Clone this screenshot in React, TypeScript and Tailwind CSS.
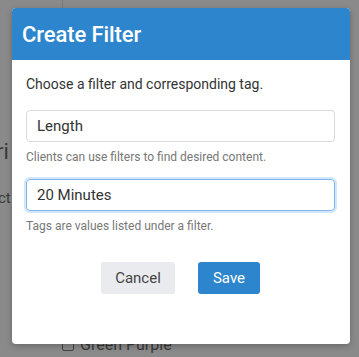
export default function App() {
  return (
    <div
      className="relative w-[359px] h-[357px] overflow-hidden bg-[#8a8a8a]"
      style={{ fontFamily: 'Roboto, "Liberation Sans", sans-serif' }}
    >
      {/* page behind the overlay */}
      <div className="flex h-full">
        <div className="w-[62px] shrink-0 flex flex-col text-[#3a3a3a]">
          <span className="mt-[138px] -ml-[4px] text-[22px] leading-[28px]">ri</span>
          <span className="mt-[22px] -ml-[2px] text-[15px] leading-[20px]">ct</span>
        </div>
        <div className="flex flex-col border-l border-[#7a7a7a] h-[10px]" />
      </div>
      <div className="absolute left-[62px] top-[333px] flex items-center gap-[6px] text-[16px] text-[#3a3a3a]">
        <span className="inline-block h-[12px] w-[12px] rounded-[2px] border border-[#444]" />
        <span>Green Purple</span>
      </div>

      {/* modal */}
      <div className="absolute left-[12px] top-[8px] w-[338px] h-[336px] rounded-[4px] bg-white overflow-hidden shadow-[0_2px_6px_rgba(0,0,0,0.25)]">
        <div className="h-[52px] bg-[#2d86cd] px-[10px] flex items-center">
          <h2 className="text-[22px] font-medium text-white tracking-[-0.1px]">Create Filter</h2>
        </div>
        <div className="px-[14px] pt-[14px] flex flex-col">
          <p className="text-[14px] text-[#333] leading-[20px]">Choose a filter and corresponding tag.</p>

          <input
            readOnly
            value="Length"
            className="mt-[16px] block w-[309px] h-[32px] rounded-[4px] border border-[#d9d9d9] px-[10px] text-[15px] text-[#333] outline-none"
          />
          <p className="mt-[7px] text-[12px] text-[#777] leading-[16px]">
            Clients can use filters to find desired content.
          </p>

          <input
            readOnly
            value="20 Minutes"
            className="mt-[14px] block w-[309px] h-[32px] rounded-[4px] border border-[#7fb6ec] shadow-[0_0_0_2px_rgba(128,185,240,0.35)] px-[10px] text-[15px] text-[#333] outline-none"
          />
          <p className="mt-[7px] text-[12px] text-[#777] leading-[16px]">
            Tags are values listed under a filter.
          </p>

          <div className="mt-[28px] flex justify-center gap-[23px] pr-[1px]">
            <button className="w-[74px] h-[32px] rounded-[3px] bg-[#e9ebef] text-[15px] text-[#444]">
              Cancel
            </button>
            <button className="w-[62px] h-[32px] rounded-[3px] bg-[#2d86cd] text-[15px] text-white">
              Save
            </button>
          </div>
        </div>
      </div>
    </div>
  );
}
